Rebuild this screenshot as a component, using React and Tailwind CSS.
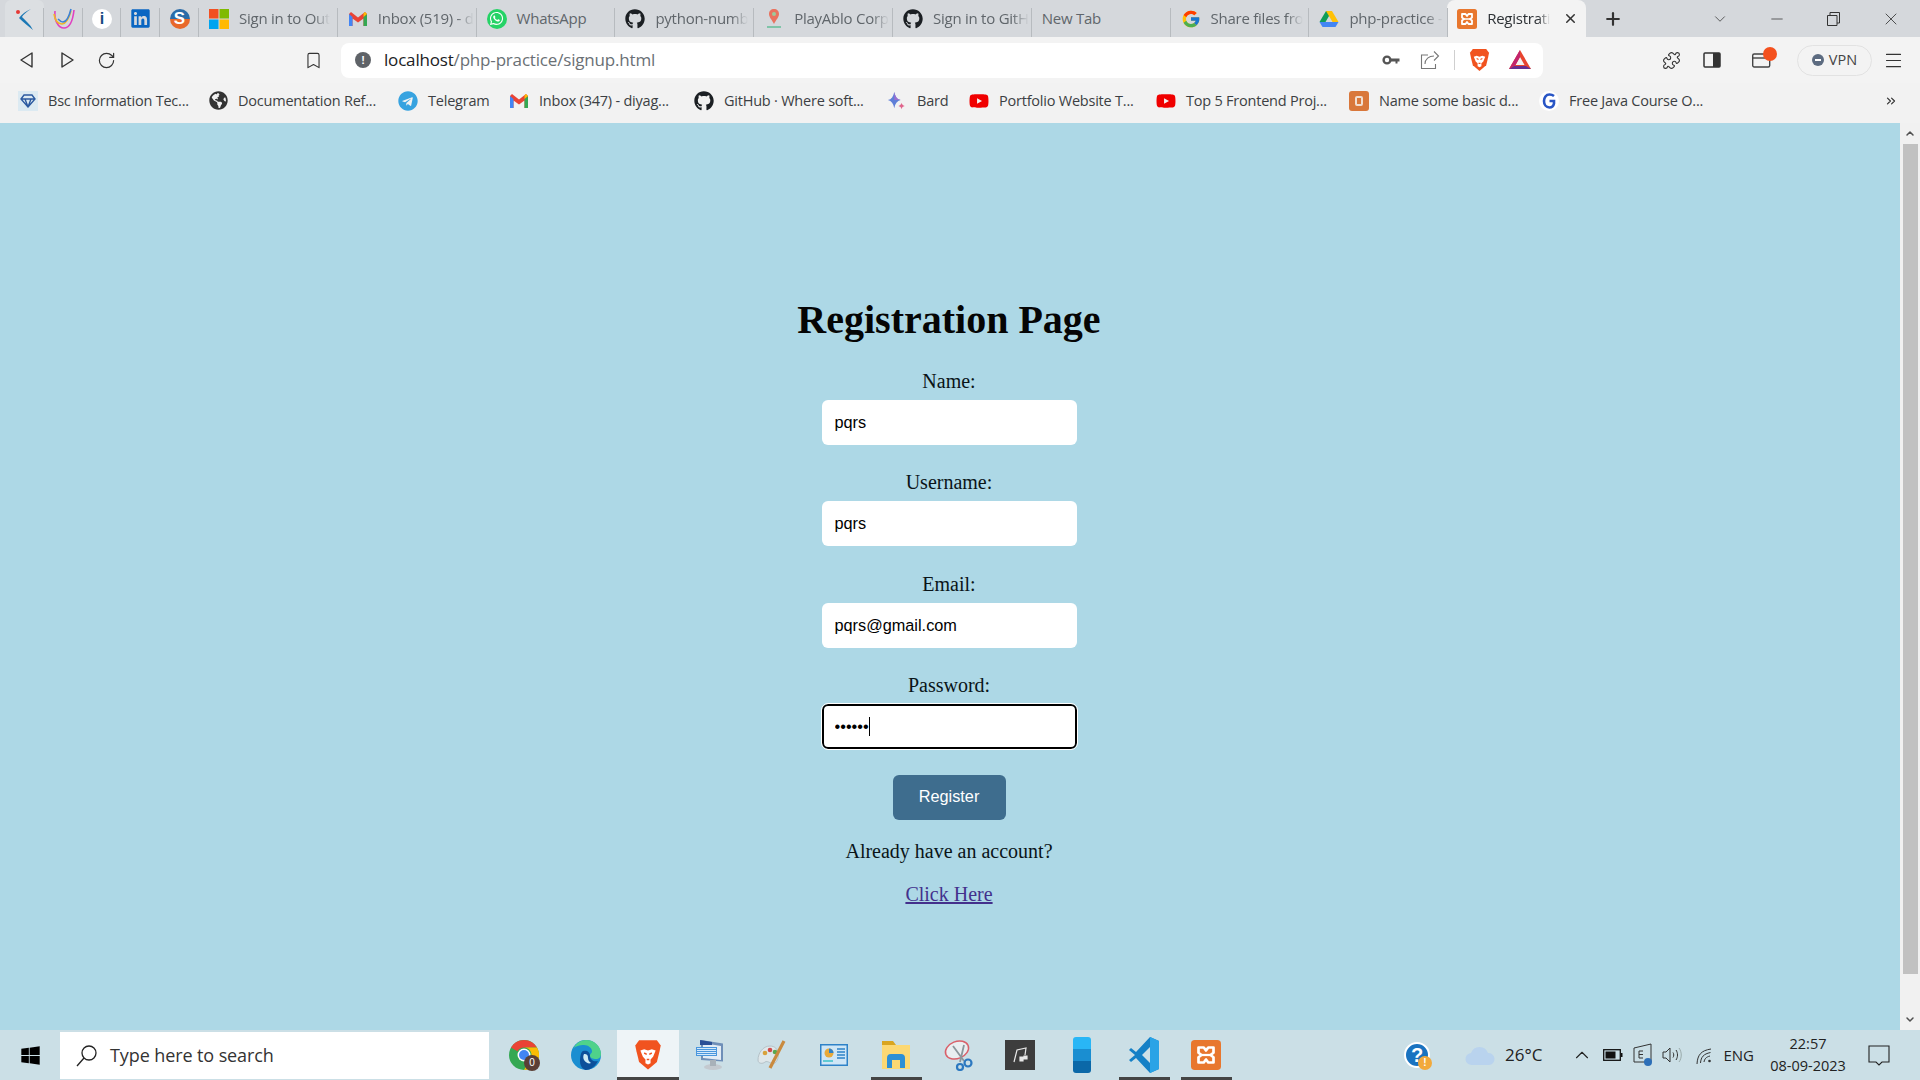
import React from 'react';
import { FaGithub, FaWhatsapp, FaLinkedin, FaTelegram, FaYoutube, FaGlobeAmericas, FaWindows } from 'react-icons/fa';
import { FcGoogle } from 'react-icons/fc';
import { ChevronDown, ChevronUp, Minus, X, Plus, RotateCw, Bookmark, Puzzle, Menu, ChevronsRight } from 'lucide-react';

const Ms = () => (<svg width="20" height="20" viewBox="0 0 20 20"><rect width="9.5" height="9.5" fill="#f25022"/><rect x="10.5" width="9.5" height="9.5" fill="#7fba00"/><rect y="10.5" width="9.5" height="9.5" fill="#00a4ef"/><rect x="10.5" y="10.5" width="9.5" height="9.5" fill="#ffb900"/></svg>);
const Gmail = () => (<svg width="20" height="20" viewBox="0 0 20 20"><path d="M1 5v12h3.5V9.5L10 13.5l5.5-4V17H19V5l-2-2-7 5.5L3 3z" fill="#ea4335"/><path d="M1 5v12h3.5V8z" fill="#4285f4"/><path d="M19 5v12h-3.5V8z" fill="#34a853"/><path d="M15.5 8 19 5l-2-2-1.500 1.200z" fill="#fbbc04"/></svg>);
const Wa = () => (<span className="flex h-5 w-5 items-center justify-center rounded-full bg-[#25d366] text-white"><FaWhatsapp size={15}/></span>);
const Gh = () => <FaGithub size={20} color="#1b1f23"/>;
const Drive = () => (<svg width="20" height="20" viewBox="0 0 20 20"><path d="M7 2h6l-6.500 11H.5z" fill="#0f9d58"/><path d="M13 2l6.500 11h-6L7 2z" fill="#ffc107"/><path d="M.5 13h19L16.500 18H3.500z" fill="#4285f4"/></svg>);
const Xampp = ({ s = 20 }) => (<svg width={s} height={s} viewBox="0 0 20 20"><rect width="20" height="20" rx="2.500" fill="#e8772e"/><path d="M5 5h3.500l1.500 2 1.500-2H15v3.500l-2 1.500 2 1.500V15h-3.500L10 13l-1.500 2H5v-3.500L7 10 5 8.500z" fill="none" stroke="#fff" strokeWidth="1.800" strokeLinejoin="round"/><path d="M7 10h6" stroke="#fff" strokeWidth="1.500"/></svg>);
const Kite = () => (<svg width="20" height="24" viewBox="0 0 20 24"><path d="M16 2C11 5 8 8 7 10c3 3 8 7 11 13-5-4-10-8-14-12C7 7 11 4 16 2z" fill="#1b78b5"/><circle cx="3" cy="5" r="2" fill="#e53935"/></svg>);
const Swoosh = () => (<svg width="22" height="22" viewBox="0 0 22 22" fill="none"><path d="M2 3c-1 9 3 17 9 17 6 0 9-9 10-18" stroke="#e040c0" strokeWidth="1.600"/><path d="M1 6c1 6 4 10 8 10 4 0 7-6 9-13" stroke="#f0b429" strokeWidth="1.600"/><path d="M5 11c2 2 3 3 5 3 3 0 6-5 8-13" stroke="#3b82d6" strokeWidth="1.600"/></svg>);
const Info = () => (<span className="flex h-5 w-5 items-center justify-center rounded-full bg-white font-['Liberation_Sans',sans-serif] text-[16px] font-bold leading-none text-[#174a82]">i</span>);
const Li = () => <FaLinkedin size={21} color="#0a66c2"/>;
const SLogo = () => (<span className="flex h-5 w-5 items-center justify-center rounded-full bg-[linear-gradient(180deg,#2a6ba8_50%,#e8682a_50%)] font-['Liberation_Sans',sans-serif] text-[17px] font-bold leading-none text-white">S</span>);
const Pin = () => (<svg width="20" height="22" viewBox="0 0 20 22"><path d="M10 1c3 0 5 2 5 5 0 3-3 6-5 10-2-4-5-7-5-10 0-3 2-5 5-5z" fill="#e9735f"/><circle cx="10" cy="6" r="2" fill="#9ccc9c"/><path d="M3 19h14" stroke="#7fc4a8" strokeWidth="2"/></svg>);
const Diamond = () => (<span className="flex h-5 w-5 items-center justify-center bg-[#dceaf2]"><svg width="16" height="14" viewBox="0 0 16 14" fill="none" stroke="#2c5aa0" strokeWidth="1.400"><path d="M4 1h8l3 4-7 8-7-8zM1 5h14M5 5l3 8 3-8"/></svg></span>);
const Bard = () => (<svg width="22" height="22" viewBox="0 0 22 22"><path d="M8 1c1 5 3 8 7 9-4 1-6 4-7 9-1-5-3-8-7-9 4-1 6-4 7-9z" fill="#5f7fd8"/><path d="M8 1c1 5 3 8 7 9H8z" fill="#9b6fd0"/><path d="M16 13c.5 2 1.500 3 3.500 3.500-2 .5-3 1.500-3.500 3.500-.5-2-1.500-3-3.500-3.500 2-.5 3-1.500 3.500-3.500z" fill="#e0658c"/></svg>);
const Yt = () => <FaYoutube size={22} color="#f00000"/>;
const Basic = () => (<span className="flex h-5 w-5 items-center justify-center rounded-[3px] bg-[#d9773a]"><span className="h-[10px] w-[8px] rounded-[2px] border-2 border-[#f1ded0]"/></span>);
const GBlue = () => (<span className="flex h-5 w-5 items-center justify-center rounded-full bg-white"><svg width="14" height="16" viewBox="0 0 14 16" fill="none"><path d="M12 3C10.500 1.800 9 1.500 7.500 1.500 4 1.500 2 4.500 2 8s2 6.500 5.500 6.500c2.500 0 4-1.500 4.500-4V8H7.500" stroke="#2855c5" strokeWidth="2.600"/></svg></span>);
const Brave = ({ s = 22 }) => (<svg width={s} height={s * 1.14} viewBox="0 0 22 25"><path d="M4 1h14l3 4-1 5-2 8-7 6-7-6-2-8-1-5z" fill="#f1531f"/><path d="M5 9l3-1 3 1 3-1 3 1-2 5-2 2v3l-2 1-2-1v-3l-2-2z" fill="#fff"/><path d="M8 11l2 1M14 11l-2 1M10 16h2" stroke="#f1531f" strokeWidth="1.200"/></svg>);
const Bat = () => (<svg width="24" height="24" viewBox="0 0 24 24"><path d="M12 2 23 21H1z" fill="#e8442f"/><path d="M1 21l5-3h12l5 3z" fill="#662d91"/><path d="M12 9l-4.500 8h9z" fill="#f2f3f3"/><path d="M12 2v7l-4.500 8-1.500 1-5 3z" fill="#c2246d"/></svg>);
const Chrome = () => (<span className="relative flex h-[30px] w-[30px]"><svg width="30" height="30" viewBox="0 0 30 30"><circle cx="15" cy="15" r="15" fill="#34a853"/><path d="M15 0a15 15 0 0 1 13 7.500H15a7.500 7.500 0 0 0-6.500 3.750L2 7.500A15 15 0 0 1 15 0z" fill="#ea4335"/><path d="M28 7.500A15 15 0 0 1 15 30l6.500-11.250A7.500 7.500 0 0 0 15 7.500z" fill="#fbbc04"/><circle cx="15" cy="15" r="6.500" fill="#fff"/><circle cx="15" cy="15" r="5" fill="#4285f4"/></svg><span className="absolute -bottom-[1px] -right-[1px] flex h-4 w-4 items-center justify-center rounded-full bg-[#5b3f36] font-['Liberation_Sans',sans-serif] text-[10px] leading-none text-white">0</span></span>);
const Edge = () => (<svg width="30" height="30" viewBox="0 0 30 30"><circle cx="15" cy="15" r="15" fill="#1a8ed1"/><path d="M2 9C5 3 10 0 15 0c8 0 15 6 15 14 0 3-2 5-5 5-3 0-6-1-6-3 0-3 2-2 2-5 0-3-4-6-8-6C9 5 4 6 2 9z" fill="#4fd28a"/><path d="M12 11c4-1 7 1 7 5 0 4 4 6 8 5-3 6-8 9-12 9-1 0-6-2-6-9 0-5 1-9 3-10z" fill="#0c4f9a"/><path d="M13 14c3 0 4 1 4 4 0 3 2 4 3 5-2 1-5 0-7-3-1-2-1-4 0-6z" fill="#cdeaf4"/></svg>);
const Keyb = () => (<svg width="30" height="32" viewBox="0 0 30 32"><path d="M6 1l22 3.500v18L6 21z" fill="#6f8fb8"/><path d="M8 4l18 3v14L8 19z" fill="#e3ecf5"/><path d="M5 1l12 2v3H5z" fill="#2a4f96"/><path d="M1 8h21v9H1z" fill="#4a96dc"/><path d="M2 9.500h19M2 11.500h19M2 13.500h19M2 15.500h19" stroke="#d5e9fb" strokeWidth="1"/><ellipse cx="18" cy="28" rx="9" ry="3" fill="#c3c9cf"/><path d="M15 21h6v6h-6z" fill="#a8b1b9"/></svg>);
const Paint = () => (<svg width="30" height="32" viewBox="0 0 30 32"><path d="M13 7C6 7 1 14 1 21c0 4 5 4 7 2 3-2 6 3 10 1 5-4 5-17-5-17z" fill="#dfe7ea" stroke="#b5c2c8"/><circle cx="8" cy="14" r="2.300" fill="#d8a13b"/><circle cx="13" cy="11" r="2.300" fill="#d14b4b"/><circle cx="18" cy="13" r="2.300" fill="#5aa84f"/><path d="M27 2 13 29" stroke="#c98a3e" strokeWidth="3.200"/></svg>);
const Ctrl = () => (<svg width="28" height="22" viewBox="0 0 28 22"><rect width="28" height="22" fill="#2e82c8"/><rect x="1.500" y="1.500" width="25" height="19" fill="#cfe6f6"/><circle cx="9" cy="9" r="4.500" fill="#e7a93b"/><path d="M9 9V4.500A4.500 4.500 0 0 1 13.500 9z" fill="#2e82c8"/><path d="M17 5h8M17 8h8M17 11h8M17 14h8" stroke="#2e82c8" strokeWidth="1.500"/><path d="M3 17h10" stroke="#3ac0c8" strokeWidth="1.500"/></svg>);
const Folder = () => (<svg width="28" height="28" viewBox="0 0 28 28"><path d="M0 0h11l3 4H0z" fill="#d9a520"/><path d="M0 4h28v24H0z" fill="#fcd873"/><path d="M5 27V17a4 4 0 0 1 4-4h10a4 4 0 0 1 4 4v10h-5v-8h-8v8z" fill="#2d8fd5"/></svg>);
const Snip = () => (<svg width="30" height="32" viewBox="0 0 30 32" fill="none"><ellipse cx="14" cy="11" rx="12" ry="8.500" stroke="#d9606a" strokeWidth="1.500" transform="rotate(-22 14 11)" fill="#e9eef1"/><path d="M10 7l11 15M21 6l-4 17" stroke="#8b969c" strokeWidth="1.800"/><circle cx="25" cy="24" r="3.500" stroke="#2c78c0" strokeWidth="2.200"/><circle cx="17" cy="28" r="3" stroke="#2c78c0" strokeWidth="2.200"/></svg>);
const DarkTile = () => (<span className="flex h-[30px] w-[30px] items-center justify-center bg-[#3d3d3d]"><svg width="18" height="18" viewBox="0 0 18 18" fill="none" stroke="#e8e8e8" strokeWidth="1.200"><path d="M3 16 6 4l9-2-1 7"/><path d="M9 11h3v4H9zM13 10h3v3h-3z" fill="#e8e8e8"/></svg></span>);
const Phone = () => (<span className="flex h-9 w-[18px] flex-col overflow-hidden rounded-[3px]"><span className="flex-1 bg-[#29b6f6]"/><span className="flex-1 bg-[#1a8ed1]"/><span className="flex-1 bg-[#0b68a8]"/></span>);
const Vs = () => (<svg width="30" height="36" viewBox="0 0 30 36"><path d="M21 0 30 4v28l-9 4L7 21l-5 4-2-2 6-5-6-5 2-2 5 4z" fill="#1580c6"/><path d="M21 0 30 4v28l-9 4z" fill="#2aa3e6"/><path d="M21 10l-8 8 8 8z" fill="#cfe0e7"/></svg>);
const Help = () => (<span className="relative flex h-[26px] w-[26px] items-center justify-center rounded-full border-2 border-white bg-[#1a73c0] font-['Liberation_Sans',sans-serif] text-[20px] font-bold leading-none text-white">?<span className="absolute -bottom-1 -right-1 flex h-[14px] w-[14px] items-center justify-center rounded-full bg-[#f2a93b] text-[10px] leading-none">!</span></span>);
const Cloud = () => (<svg width="30" height="22" viewBox="0 0 30 22"><path d="M7 21a6 6 0 0 1-1-12 9 9 0 0 1 17 0 6 6 0 0 1 1 12z" fill="#b9d3ee"/></svg>);
const KeyIcon = () => (<svg width="18" height="10" viewBox="0 0 18 10"><circle cx="5" cy="5" r="3.400" fill="none" stroke="#555" strokeWidth="2.400"/><path d="M8 3.500h9.500v3h-2v2h-2v-2H8z" fill="#555"/></svg>);
const ShareIcon = () => (<svg width="20" height="20" viewBox="0 0 20 20" fill="none" stroke="#777" strokeWidth="1.100"><path d="M8 5H1.500v13.500h14V14"/><path d="M5 14c0-5 4-8 9-8M14 1.500 18.500 6 14 10.500"/></svg>);
const SearchIcon = () => (<svg width="22" height="24" viewBox="0 0 22 24" fill="none" stroke="#222" strokeWidth="1.300"><circle cx="13" cy="9" r="7"/><path d="M8 14 1 22"/></svg>);
const BatteryIcon = () => (<svg width="20" height="12" viewBox="0 0 20 12"><rect x=".7" y=".7" width="16.600" height="10.600" fill="none" stroke="#111" strokeWidth="1.300"/><rect x="2.500" y="2.500" width="10" height="7" fill="#111"/><rect x="18" y="4" width="1.500" height="4" fill="#111"/></svg>);
const ResumeIcon = () => (<svg width="20" height="24" viewBox="0 0 20 24" fill="none" stroke="#333"><path d="M1 5l17-4v18H1z"/><path d="M10 8H6v7h4M6 11.500h4"/><circle cx="15" cy="19" r="4" fill="#2d6fb8" stroke="none"/></svg>);
const SpeakerIcon = () => (<svg width="22" height="18" viewBox="0 0 22 18" fill="none" stroke="#333"><path d="M1 6h3l4-4v14l-4-4H1z"/><path d="M11 6.500c1 1.500 1 3.500 0 5"/><path d="M14 4c2 3 2 7 0 10"/><path d="M17 2c3 4 3 10 0 14" stroke="#9aa"/></svg>);
const WifiIcon = () => (<svg width="20" height="20" viewBox="0 0 20 20" fill="none" stroke="#333"><circle cx="15.500" cy="16" r="1.300" fill="#333" stroke="none"/><path d="M10 17c.5-3 2-5 6-6"/><path d="M6.500 18c.5-6 3-9 10-10.500"/><path d="M3 19C3.500 10 7 5.500 17 4"/></svg>);
const NotifIcon = () => (<svg width="22" height="21" viewBox="0 0 22 21" fill="none" stroke="#222" strokeWidth="1.100"><path d="M1 1h20v16h-7l-3 3-3-3H1z"/></svg>);

const SANS = "font-['Open_Sans','Noto_Sans',sans-serif]";
const SEP = "relative after:absolute after:bottom-0 after:right-0 after:top-[8px] after:w-px after:bg-[#b7bbbf]";

const pinned = [
  { icon: <Kite />, w: 'w-[39px] rounded-t-[6px] bg-[#dcdfe2]' },
  { icon: <Swoosh />, w: 'w-[39px]' },
  { icon: <Info />, w: 'w-[38px]' },
  { icon: <Li />, w: 'w-[39px]' },
  { icon: <SLogo />, w: 'w-[39px]' },
];
const tabs = [
  { icon: <Ms />, t: 'Sign in to Out', fade: true },
  { icon: <Gmail />, t: 'Inbox (519) - d', fade: true },
  { icon: <Wa />, t: 'WhatsApp' },
  { icon: <Gh />, t: 'python-numb', fade: true },
  { icon: <Pin />, t: 'PlayAblo Corp', fade: true },
  { icon: <Gh />, t: 'Sign in to GitH', fade: true },
  { icon: null, t: 'New Tab' },
  { icon: <FcGoogle size={20} />, t: 'Share files fro', fade: true },
  { icon: <Drive />, t: 'php-practice -', fade: true },
];
const marks = [
  { icon: <Diamond />, t: 'Bsc Information Tec...', w: 'w-[190px]' },
  { icon: <FaGlobeAmericas size={19} color="#333" />, t: 'Documentation Ref...', w: 'w-[190px]' },
  { icon: <FaTelegram size={20} color="#37a3e0" />, t: 'Telegram', w: 'w-[111px]' },
  { icon: <Gmail />, t: 'Inbox (347) - diyag...', w: 'w-[185px]' },
  { icon: <Gh />, t: 'GitHub · Where soft...', w: 'w-[193px]' },
  { icon: <Bard />, t: 'Bard', w: 'w-[82px]' },
  { icon: <Yt />, t: 'Portfolio Website T...', w: 'w-[187px]' },
  { icon: <Yt />, t: 'Top 5 Frontend Proj...', w: 'w-[193px]' },
  { icon: <Basic />, t: 'Name some basic d...', w: 'w-[190px]' },
  { icon: <GBlue />, t: 'Free Java Course O...', w: 'w-[300px]' },
];
const dock = [
  { i: <Chrome /> }, { i: <Edge /> },
  { i: <Brave s={28} />, on: true, active: true },
  { i: <Keyb /> }, { i: <Paint /> }, { i: <Ctrl /> },
  { i: <Folder />, on: true }, { i: <Snip /> }, { i: <DarkTile /> }, { i: <Phone /> },
  { i: <Vs />, on: true }, { i: <Xampp s={30} />, on: true },
];

function Tab({ icon, t, fade }) {
  return (
    <div className={`flex h-[37px] w-[138.8px] shrink-0 items-center pl-[10px] ${SEP}`}>
      {icon && <span className="mr-[10px] flex w-5 shrink-0 items-center justify-center">{icon}</span>}
      <span className={fade
        ? "whitespace-nowrap text-[15px] tracking-[-0.25px] text-[#60666b] [mask-image:linear-gradient(to_right,black_82%,transparent)]"
        : "whitespace-nowrap text-[15px] tracking-[-0.25px] text-[#60666b]"}>{t}</span>
    </div>
  );
}

function Field({ label, value, type = 'text', focus, gap = 'mb-[26px]' }) {
  return (
    <div className={`flex flex-col items-center ${gap}`}>
      <label className="mb-[7px] h-[23px] text-[20px] leading-[23px] text-[#0a1418]">{label}</label>
      <div className="relative">
        <input
          readOnly
          type={type}
          value={value}
          className={focus
            ? "block h-[45px] w-[255px] rounded-[6px] border-2 border-black bg-white px-[11px] font-['Liberation_Sans',sans-serif] text-[16.3px] text-black outline outline-1 outline-white"
            : "block h-[45px] w-[255px] rounded-[6px] bg-white px-[13px] font-['Liberation_Sans',sans-serif] text-[16.3px] text-black"}
        />
        {focus && <span className="absolute left-[47px] top-[13px] h-[19px] w-px bg-black" />}
      </div>
    </div>
  );
}

export default function App() {
  return (
    <div className={`flex h-screen w-full flex-col overflow-hidden bg-[#add8e6] ${SANS}`}>
      {/* tab strip */}
      <div className="flex h-[37px] shrink-0 items-stretch bg-[#d5d8dc] pl-[5px]">
        {pinned.map((p, i) => (
          <div key={i} className={`flex items-center justify-center ${SEP} ${p.w}`}>{p.icon}</div>
        ))}
        {tabs.map((t, i) => <Tab key={i} {...t} />)}
        <div className="-ml-px flex w-[139px] shrink-0 items-center rounded-t-[8px] bg-[#f3f3f3] pl-[10px] pr-[8px]">
          <span className="mr-[10px] shrink-0"><Xampp /></span>
          <span className="whitespace-nowrap text-[15px] tracking-[-0.25px] text-[#2e3236] [mask-image:linear-gradient(to_right,black_82%,transparent)]">Registrati</span>
          <X size={15} strokeWidth={2.4} className="ml-auto text-[#333]" />
        </div>
        <div className="ml-[11px] flex w-8 items-center justify-center"><Plus size={20} strokeWidth={2.6} className="text-[#333]" /></div>
        <div className="ml-auto flex items-stretch">
          <div className="flex w-[57px] items-center justify-center"><ChevronDown size={18} strokeWidth={1} className="text-[#333]" /></div>
          <div className="flex w-[57px] items-center justify-center"><Minus size={18} strokeWidth={1} className="text-[#333]" /></div>
          <div className="flex w-[57px] items-center justify-center">
            <svg width="13" height="14" viewBox="0 0 13 14" fill="none" stroke="#333"><path d="M.5 3.500h9.500v10H.5zM3 3.500V.5h9.500V11H10"/></svg>
          </div>
          <div className="flex w-[58px] items-center justify-center"><X size={20} strokeWidth={1} className="text-[#333]" /></div>
        </div>
      </div>

      {/* toolbar */}
      <div className="flex h-[46px] shrink-0 items-center bg-[#f3f3f3]">
        <div className="flex w-[341px] shrink-0 items-center pl-[17px]">
          <svg width="20" height="20" viewBox="0 0 20 20" fill="none" stroke="#333" strokeWidth="1.400" strokeLinejoin="round"><path d="M15 3v14L4 10z"/></svg>
          <svg className="ml-[20px]" width="20" height="20" viewBox="0 0 20 20" fill="none" stroke="#333" strokeWidth="1.400" strokeLinejoin="round"><path d="M5 3v14l11-7z"/></svg>
          <RotateCw size={19} strokeWidth={1.5} className="ml-[20px] text-[#333]" />
          <Bookmark size={19} strokeWidth={1.4} className="ml-[188px] text-[#333]" />
        </div>
        <div className="flex h-[35px] w-[1202px] shrink-0 items-center rounded-[8px] bg-white pl-[14px]">
          <span className="flex h-4 w-4 items-center justify-center rounded-full bg-[#5f6368] font-['Liberation_Sans',sans-serif] text-[11px] font-bold leading-none text-white">!</span>
          <span className="ml-[13px] text-[17px] tracking-[-0.18px] text-[#6a7075]"><span className="text-[#202124]">localhost</span>/php-practice/signup.html</span>
          <span className="ml-auto flex items-center"><KeyIcon /></span>
          <span className="ml-[20px] flex items-center"><ShareIcon /></span>
          <span className="ml-[14px] h-[20px] w-px bg-[#cfcfcf]" />
          <span className="ml-[14px]"><Brave s={21} /></span>
          <span className="ml-[18px] mr-[11px]"><Bat /></span>
        </div>
        <Puzzle size={19} strokeWidth={1.4} className="ml-[119px] text-[#333]" />
        <svg className="ml-[22px]" width="18" height="16" viewBox="0 0 18 16"><rect x="1" y="1" width="16" height="14" rx="1" fill="none" stroke="#333" strokeWidth="1.500"/><rect x="10" y="1" width="7" height="14" fill="#333"/></svg>
        <span className="relative ml-[31px]">
          <svg width="20" height="18" viewBox="0 0 20 18" fill="none" stroke="#444" strokeWidth="1.400"><rect x=".7" y="3" width="17" height="13" rx="1.500"/><path d="M.7 7h17"/></svg>
          <span className="absolute -right-[5px] -top-[4px] h-[14px] w-[14px] rounded-full bg-[#f4511e]" />
        </span>
        <div className="ml-[25px] flex h-[31px] w-[75px] items-center justify-center rounded-full border border-[#e2e2e2] text-[14.5px] text-[#444]">
          <span className="mr-[5px] flex h-3 w-3 items-center justify-center rounded-full bg-[#5c6b80]"><span className="h-[2px] w-[6px] bg-white" /></span>VPN
        </div>
        <Menu size={21} strokeWidth={1.3} className="ml-[11px] text-[#333]" />
      </div>

      {/* bookmarks */}
      <div className="flex h-[40px] shrink-0 items-center bg-[#f2f2f2] pb-[5px] pl-[18px]">
        {marks.map((m, i) => (
          <div key={i} className={`flex shrink-0 items-center whitespace-nowrap ${m.w}`}>
            <span className="mr-[10px] flex w-5 shrink-0 items-center justify-center">{m.icon}</span>
            <span className="text-[14.5px] tracking-[-0.22px] text-[#3c3f43]">{m.t}</span>
          </div>
        ))}
        <ChevronsRight size={14} strokeWidth={2} className="ml-auto mr-[22px] text-[#333]" />
      </div>

      {/* page */}
      <div className="flex min-h-0 flex-1">
        <main className="flex flex-1 flex-col items-center pr-[2px] pt-[174px] font-['Liberation_Serif',serif]">
          <h1 className="mb-[27px] h-[46px] text-[40px] font-bold leading-[46px] text-[#050505]">Registration Page</h1>
          <Field label="Name:" value="pqrs" />
          <Field label="Username:" value="pqrs" gap="mb-[27px]" />
          <Field label="Email:" value="pqrs@gmail.com" />
          <Field label="Password:" value="pqrs12" type="password" focus />
          <button className="flex h-[45px] w-[113px] items-center justify-center rounded-[6px] bg-[#3e6d8e] pb-[2px] font-['Liberation_Sans',sans-serif] text-[16.3px] text-white">Register</button>
          <p className="mt-[20px] h-[23px] text-[20px] leading-[23px] text-[#0a1418]">Already have an account?</p>
          <a href="#" className="mt-[20px] h-[23px] text-[20px] leading-[23px] text-[#43308c] underline">Click Here</a>
        </main>
        <div className="flex w-5 shrink-0 flex-col items-center bg-[#f1f1f1]">
          <ChevronUp size={12} strokeWidth={3} className="mt-[3px] h-[15px] text-[#505050]" />
          <div className="mt-[3px] w-[15px] flex-1 bg-[#c1c1c1]" />
          <ChevronDown size={12} strokeWidth={3} className="mb-[3px] mt-[38px] h-[15px] text-[#505050]" />
        </div>
      </div>

      {/* taskbar */}
      <div className="flex h-[50px] shrink-0 items-stretch bg-[#cbdfe6]">
        <div className="flex w-[60px] items-center justify-center"><FaWindows size={21} color="#000" /></div>
        <div className="mb-px mt-[2px] flex w-[429px] items-center bg-white pl-[16px]">
          <SearchIcon />
          <span className="ml-[12px] text-[18px] tracking-[-0.1px] text-[#333]">Type here to search</span>
        </div>
        <div className="ml-[4px] flex">
          {dock.map((d, i) => (
            <div key={i} className={`relative flex w-[62px] items-center justify-center ${d.active ? 'bg-[#eef4f7]' : ''}`}>
              {d.i}
              {d.on && <span className={`absolute bottom-0 h-[3px] bg-[#444] ${d.active ? 'w-[62px]' : 'w-[51px]'}`} />}
            </div>
          ))}
        </div>
        <div className="ml-auto flex items-center text-[#222]">
          <Help />
          <span className="ml-[35px]"><Cloud /></span>
          <span className="ml-[10px] text-[17px]">26°C</span>
          <ChevronUp size={22} strokeWidth={1.2} className="ml-[29px]" />
          <span className="ml-[10px]"><BatteryIcon /></span>
          <span className="ml-[10px]"><ResumeIcon /></span>
          <span className="ml-[9px]"><SpeakerIcon /></span>
          <span className="ml-[10px]"><WifiIcon /></span>
          <span className="ml-[9px] text-[15px]">ENG</span>
          <div className="ml-[16px] flex w-[76px] flex-col items-center text-[14.5px] leading-[22px]"><span>22:57</span><span>08-09-2023</span></div>
          <span className="ml-[22px] mr-[30px]"><NotifIcon /></span>
        </div>
      </div>
    </div>
  );
}
